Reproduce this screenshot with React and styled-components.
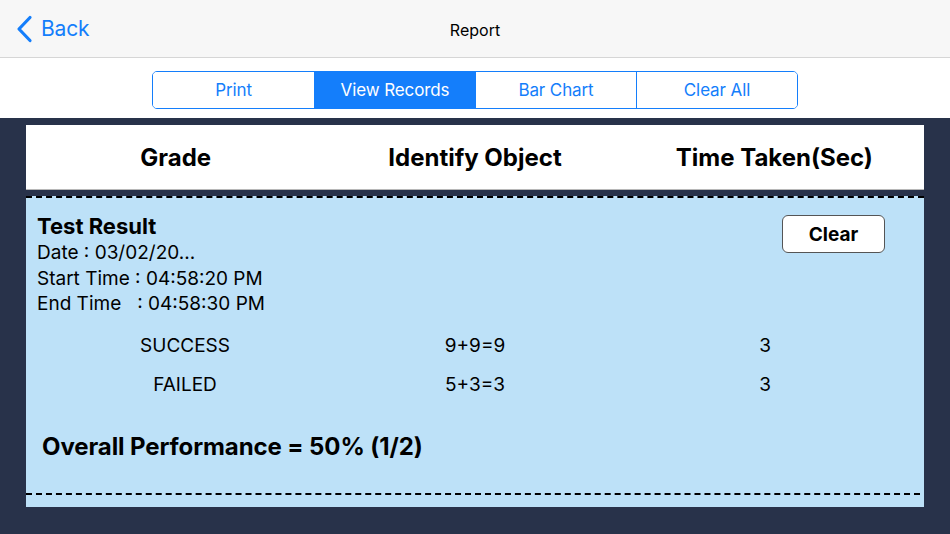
import React from 'react'
import styled, { createGlobalStyle } from 'styled-components'

const Blue = '#147efb'
const Navy = '#28324a'
const Sky = '#bde1f8'

const GlobalStyle = createGlobalStyle`
  html, body {
    margin: 0;
    padding: 0;
    background: ${Navy};
    font-family: Inter, "Noto Sans", "Liberation Sans", sans-serif;
    color: #000;
  }
`

const Page = styled.div`
  width: 950px;
  height: 534px;
  display: flex;
  flex-direction: column;
  overflow: hidden;
  background: ${Navy};
`

const NavBar = styled.header`
  height: 57px;
  flex-shrink: 0;
  display: grid;
  grid-template-columns: 1fr auto 1fr;
  align-items: center;
  background: #f7f7f7;
  border-bottom: 1px solid #d6d6d6;
`

const BackButton = styled.button`
  display: flex;
  align-items: center;
  gap: 8px;
  padding: 0 0 0 16px;
  border: none;
  background: none;
  color: ${Blue};
  font-family: inherit;
  font-size: 21px;
  letter-spacing: -0.2px;
  cursor: pointer;
  justify-self: start;

  svg {
    width: 17px;
    height: 28px;
  }
`

const Title = styled.h1`
  margin: 2px 0 0;
  font-size: 16px;
  font-weight: 400;
`

const SegmentBar = styled.div`
  height: 60px;
  flex-shrink: 0;
  display: flex;
  justify-content: center;
  align-items: flex-start;
  padding-top: 13px;
  box-sizing: border-box;
  background: #fff;
`

const Segments = styled.div`
  display: flex;
  border: 1px solid ${Blue};
  border-radius: 5px;
  overflow: hidden;
`

const Segment = styled.button`
  width: 161px;
  height: 36px;
  border: none;
  border-left: ${p => (p.$first ? 'none' : `1px solid ${Blue}`)};
  background: ${p => (p.$active ? Blue : '#fff')};
  color: ${p => (p.$active ? '#fff' : Blue)};
  font-family: inherit;
  font-size: 17px;
  letter-spacing: -0.1px;
  cursor: pointer;
`

const Content = styled.main`
  flex: 1;
  display: flex;
  flex-direction: column;
  padding: 7px 26px 0;
`

const HeaderCard = styled.div`
  height: 64px;
  display: grid;
  grid-template-columns: repeat(3, 1fr);
  align-items: center;
  background: #fff;
  border-bottom: 1px solid #b8b8b8;
`

const HeaderCell = styled.div`
  text-align: center;
  font-size: 24px;
  font-weight: 700;
`

const ResultCard = styled.section`
  margin-top: 6px;
  height: 311px;
  box-sizing: border-box;
  background: ${Sky};
  border-top: 2px dashed #000;
  display: flex;
  flex-direction: column;
  padding: 14px 0 0;
`

const TopRow = styled.div`
  display: flex;
  justify-content: space-between;
  align-items: flex-start;
  padding: 0 39px 0 11px;
`

const Info = styled.div`
  display: flex;
  flex-direction: column;
`

const ResultTitle = styled.h2`
  margin: 0;
  font-size: 22px;
  font-weight: 700;
  line-height: 28px;
`

const InfoLine = styled.div`
  font-size: 19px;
  line-height: 25.5px;
  white-space: pre;
`

const ClearButton = styled.button`
  margin-top: 3px;
  width: 103px;
  height: 38px;
  border: 1px solid #555;
  border-radius: 6px;
  background: #fff;
  font-family: inherit;
  font-size: 19px;
  font-weight: 700;
  cursor: pointer;
`

const Rows = styled.div`
  margin-top: 16px;
  display: flex;
  flex-direction: column;
  gap: 13px;
  padding: 0 14px;
`

const Row = styled.div`
  display: grid;
  grid-template-columns: repeat(3, 1fr);
  font-size: 19px;
  line-height: 26px;
  text-align: center;
`

const Overall = styled.div`
  margin-top: 34px;
  padding-left: 16px;
  font-size: 24px;
  font-weight: 700;
  line-height: 30px;
  letter-spacing: -0.1px;
`

const Divider = styled.div`
  margin-top: 31px;
  margin-right: 4px;
  border-top: 2px dashed #000;
`

const records = [
  { grade: 'SUCCESS', object: '9+9=9', time: 3 },
  { grade: 'FAILED', object: '5+3=3', time: 3 },
]

const tabs = ['Print', 'View Records', 'Bar Chart', 'Clear All']

export default function App() {
  return (
    <Page>
      <GlobalStyle />
      <NavBar>
        <BackButton>
          <svg viewBox="0 0 17 28" fill="none" stroke={Blue} strokeWidth="3.2" strokeLinecap="round" strokeLinejoin="round">
            <path d="M14 2.5 L3 14 L14 25.5" />
          </svg>
          Back
        </BackButton>
        <Title>Report</Title>
        <div />
      </NavBar>
      <SegmentBar>
        <Segments>
          {tabs.map((t, i) => (
            <Segment key={t} $first={i === 0} $active={t === 'View Records'}>{t}</Segment>
          ))}
        </Segments>
      </SegmentBar>
      <Content>
        <HeaderCard>
          <HeaderCell>Grade</HeaderCell>
          <HeaderCell>Identify Object</HeaderCell>
          <HeaderCell>Time Taken(Sec)</HeaderCell>
        </HeaderCard>
        <ResultCard>
          <TopRow>
            <Info>
              <ResultTitle>Test Result</ResultTitle>
              <InfoLine>Date : 03/02/20...</InfoLine>
              <InfoLine>Start Time : 04:58:20 PM</InfoLine>
              <InfoLine>End Time   : 04:58:30 PM</InfoLine>
            </Info>
            <ClearButton>Clear</ClearButton>
          </TopRow>
          <Rows>
            {records.map(r => (
              <Row key={r.object}>
                <div>{r.grade}</div>
                <div>{r.object}</div>
                <div>{r.time}</div>
              </Row>
            ))}
          </Rows>
          <Overall>Overall Performance = 50% (1/2)</Overall>
          <Divider />
        </ResultCard>
      </Content>
    </Page>
  )
}
